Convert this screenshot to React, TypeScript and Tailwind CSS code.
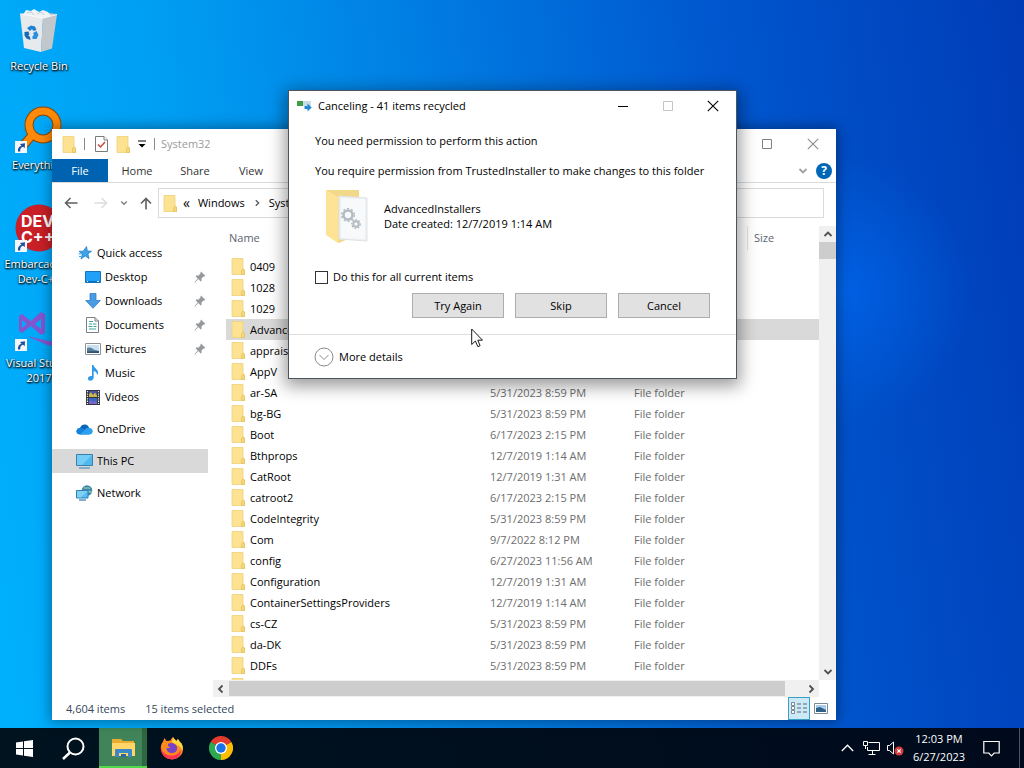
import type { ReactNode } from "react";

type FileRow = {
  name: string;
  modified: string;
  selected?: boolean;
};

type SidebarItem = {
  label: string;
  icon: ReactNode;
  pinned?: boolean;
  nested?: boolean;
  active?: boolean;
  spaced?: boolean;
};

const FILES: FileRow[] = [
  { name: "0409", modified: "12/7/2019 1:31 AM" },
  { name: "1028", modified: "5/31/2023 8:59 PM" },
  { name: "1029", modified: "5/31/2023 8:59 PM" },
  { name: "AdvancedInstallers", modified: "12/7/2019 1:14 AM", selected: true },
  { name: "appraiser", modified: "5/31/2023 8:59 PM" },
  { name: "AppV", modified: "5/31/2023 8:59 PM" },
  { name: "ar-SA", modified: "5/31/2023 8:59 PM" },
  { name: "bg-BG", modified: "5/31/2023 8:59 PM" },
  { name: "Boot", modified: "6/17/2023 2:15 PM" },
  { name: "Bthprops", modified: "12/7/2019 1:14 AM" },
  { name: "CatRoot", modified: "12/7/2019 1:31 AM" },
  { name: "catroot2", modified: "6/17/2023 2:15 PM" },
  { name: "CodeIntegrity", modified: "5/31/2023 8:59 PM" },
  { name: "Com", modified: "9/7/2022 8:12 PM" },
  { name: "config", modified: "6/27/2023 11:56 AM" },
  { name: "Configuration", modified: "12/7/2019 1:31 AM" },
  { name: "ContainerSettingsProviders", modified: "12/7/2019 1:14 AM" },
  { name: "cs-CZ", modified: "5/31/2023 8:59 PM" },
  { name: "da-DK", modified: "5/31/2023 8:59 PM" },
  { name: "DDFs", modified: "5/31/2023 8:59 PM" },
  { name: "de-DE", modified: "5/31/2023 8:59 PM" },
];

/* ---------- icons ---------- */

function FolderIcon() {
  return (
    <svg width="14" height="17" viewBox="0 0 14 17" className="shrink-0">
      <path d="M1 .5h11v10.500l1.500 1V16.500H1z" fill="#fde391" stroke="#edd07c" strokeWidth=".8" />
      <path d="M10.500 16.500V12.500l1.500-1.500 1.500 1v4.500z" fill="#f6d877" stroke="#e3bf5c" strokeWidth=".7" />
    </svg>
  );
}

function Chevron({ d, color = "#505050", size = 10 }: { d: string; color?: string; size?: number }) {
  return (
    <svg width={size} height={size} viewBox="0 0 10 10" fill="none" stroke={color} strokeWidth="1.8">
      <path d={d} />
    </svg>
  );
}

const UP = "M1.5 7 5 3.5 8.5 7";
const DOWN = "M1.5 3 5 6.5 8.5 3";
const LEFT = "M6.5 1.5 3 5l3.5 3.5";
const RIGHT = "M3.5 1.5 7 5 3.5 8.5";

function CloseIcon({ color }: { color: string }) {
  return (
    <svg width="12" height="12" viewBox="0 0 12 12" stroke={color} strokeWidth="1.1">
      <path d="M.8.8l10.4 10.4M11.2.8.8 11.2" />
    </svg>
  );
}

function MaximizeIcon({ color }: { color: string }) {
  return (
    <svg width="10" height="10" viewBox="0 0 10 10" fill="none" stroke={color}>
      <path d="M.5.5h9v9h-9z" />
    </svg>
  );
}

function PinIcon() {
  return (
    <svg width="12" height="12" viewBox="0 0 12 12" fill="#96999c">
      <path d="M7 .5 11.5 5l-1.2.6-.8-.1-2 2 .1 2.200-.9.8-2.400-2.400L1 11.400l-.5-.5 3.300-3.300L1.500 5.300l.8-.9 2.200.1 2-2-.1-.8z" />
    </svg>
  );
}

function StarIcon() {
  return (
    <svg width="14" height="14" viewBox="0 0 14 14">
      <path d="M8.500.6 9.300 4.900 13.500 5.300 9.900 7.800 11 12.600 7.200 9.900 3 13l1.400-4.900L1 5.400l4.300-.2z" fill="#3ea3e8" stroke="#1d7fc7" strokeWidth=".8" />
      <path d="M.5 8h3M1 10.500h2" stroke="#3ea3e8" />
    </svg>
  );
}

function DesktopIcon() {
  return (
    <svg width="16" height="14" viewBox="0 0 16 14">
      <path d="M.5 1.500h15v11H.5z" fill="#22a0f8" stroke="#1673c0" />
      <path d="M1 11.500h14" stroke="#0d6cb8" />
      <path d="M2 11.500h1M12 11.500h2" stroke="#d8efff" />
    </svg>
  );
}

function DownloadIcon() {
  return (
    <svg width="16" height="16" viewBox="0 0 16 16">
      <path d="M5 .5h6v7h4.300L8 15.300.7 7.500H5z" fill="#4a9be2" stroke="#2f7fc8" strokeWidth=".8" />
    </svg>
  );
}

function DocumentIcon() {
  return (
    <svg width="13" height="16" viewBox="0 0 13 16">
      <path d="M.5.5h8.500L12.500 4v11.500H.5z" fill="#fff" stroke="#7b8084" />
      <path d="M9 .5V4h3.500" fill="none" stroke="#7b8084" />
      <path d="M3 4.500h4M3 7h3M7 7h3.500M2.500 9.500h4M7.500 9.500h3M3 12h7" stroke="#3ba7a0" strokeWidth="1.200" />
    </svg>
  );
}

function PictureIcon() {
  return (
    <svg width="16" height="12" viewBox="0 0 16 12">
      <path d="M.5.5h15v11H.5z" fill="#fff" stroke="#8b9299" />
      <path d="M2 2h12v8H2z" fill="#c7e0f4" />
      <path d="M2 5c3-1.500 5 .5 8 2l4 1v2H2z" fill="#5b7f96" />
      <path d="M2 8.500 14 8v2H2z" fill="#2f5573" />
    </svg>
  );
}

function MusicIcon() {
  return (
    <svg width="12" height="16" viewBox="0 0 12 16">
      <path d="M5 0h1.500c.3 3 4.500 4 4.500 7.500 0 1.200-.4 2-1 2.800.3-2.300-1.300-3.800-3.300-4.300V12.500C6.700 14.500 5 15.700 3.300 15.700 1.800 15.700.8 14.800.8 13.600c0-1.700 2.200-3.100 4.200-2.500z" fill="#2f9be6" />
    </svg>
  );
}

function VideoIcon() {
  return (
    <svg width="14" height="15" viewBox="0 0 14 15">
      <path d="M0 0h14v15H0z" fill="#33353a" />
      <path d="M1.500 1v13M12.500 1v13" stroke="#e9e9e9" strokeWidth="1.200" strokeDasharray="1.300 1.100" />
      <path d="M3 1h8v6H3z" fill="#4850a8" />
      <path d="M3 8h8v6H3z" fill="#3867c4" />
      <path d="M3 4.500 5 2l2 3 2-2.500 2 3V7H3z" fill="#c9b84c" />
      <path d="M3 12l2-2 2 2.500 2-2 2 2V14H3z" fill="#7a68c8" />
    </svg>
  );
}

function OneDriveIcon() {
  return (
    <svg width="17" height="11" viewBox="0 0 17 11">
      <path d="M4 4C5 1.400 7 .3 9 .5c2 .2 3.500 1.500 4 3.200L9 7.500z" fill="#0a64b8" />
      <path d="M4.500 3.700C2 3.800.3 5.200.3 7.300c0 2 1.500 3.300 3.400 3.300h9.800L8 5z" fill="#1382d8" />
      <path d="M12.500 3.800c2.600 0 4.200 1.400 4.200 3.500 0 2-1.500 3.300-3.300 3.300H4L9.500 5c.8-.8 1.800-1.200 3-1.200z" fill="#2b9ff0" />
    </svg>
  );
}

function PcIcon() {
  return (
    <svg width="17" height="15" viewBox="0 0 17 15">
      <path d="M.5.5h16v11H.5z" fill="#4fb9ee" stroke="#3c7fa8" />
      <path d="M1 1h15L6 11H1z" fill="#8fd8f8" opacity=".6" />
      <path d="M3 14h11" stroke="#4a8fbd" strokeWidth="1.200" />
    </svg>
  );
}

function NetworkIcon() {
  return (
    <svg width="17" height="16" viewBox="0 0 17 16">
      <circle cx="11" cy="5.500" r="5.300" fill="#3f86ac" />
      <path d="M8 2.500c2 2 3-1 6 1M9 6c3 0 4 1 7 1" stroke="#8cc4b0" strokeWidth="1.300" fill="none" />
      <path d="M.5 5.500h11.500v7.500H.5z" fill="#58bdf0" stroke="#2d7fb0" />
      <path d="M1 6h10.500L5 12.500H1z" fill="#9adcf8" opacity=".6" />
      <path d="M3 15h7" stroke="#2d7fb0" strokeWidth="1.200" />
    </svg>
  );
}

function ShortcutArrow() {
  return (
    <svg width="12" height="12" viewBox="0 0 12 12" className="absolute bottom-0 left-0">
      <path d="M0 0h12v12H0z" fill="#f4f6fa" />
      <path d="M3 10.500C2.500 7.500 4 5.300 6.500 4.800L5 3l5-.8-.3 5-1.500-1.400C6 6.200 5 8 5.200 10.500z" fill="#1c4f9c" />
    </svg>
  );
}

function RecycleBinIcon() {
  return (
    <svg width="48" height="48" viewBox="0 0 48 48">
      <path d="M5 8 16 5l26 3-14 5z" fill="#c3ccd3" />
      <path d="M8 9l3-5 5 1 3-2 5 3 4-2 5 2 3 4-8 3z" fill="#eef2f5" />
      <path d="M12 7l4-1 3 3M22 8l4-2 3 3" stroke="#c3ccd3" fill="none" />
      <path d="M5 8l23 4-2 34-17-4z" fill="#e6eaed" />
      <path d="M28 12l14-3.500-5 34L26 46z" fill="#c2c7cc" />
      <path d="M5 8l23 4 14-3.500" fill="none" stroke="#f8fafb" />
      <path d="M12 22l4-2.500 4 1 1.500 3.500-3 1-1.500-2-2 2z" fill="#1f7fd2" />
      <path d="M21.500 25l2 4-2 4-4 0 0-3 1.500-1-1-2z" fill="#2b8fe0" />
      <path d="M9.500 26l4-.5 1 3-1.500.5 2 2 .5 3-4-1.500-2-3z" fill="#1668b8" />
    </svg>
  );
}

function EverythingIcon() {
  return (
    <svg width="48" height="48" viewBox="0 0 48 48">
      <path d="M18 29 8 41" stroke="#8c4700" strokeWidth="9" />
      <circle cx="28" cy="20" r="14" fill="none" stroke="#8c4700" strokeWidth="9" />
      <path d="M18.500 28.500 8 41" stroke="#ff8a0a" strokeWidth="7" />
      <circle cx="28" cy="20" r="14" fill="none" stroke="#ff8a0a" strokeWidth="7" />
    </svg>
  );
}

function DevCppIcon() {
  return (
    <svg width="48" height="48" viewBox="0 0 48 48">
      <circle cx="24" cy="24" r="23.500" fill="#c91f26" />
      <g fill="#fff" fontFamily="Inter, sans-serif" fontWeight="700" fontSize="16">
        <text x="6" y="23">DEV</text>
        <text x="6" y="39">C++</text>
      </g>
    </svg>
  );
}

function VisualStudioIcon() {
  return (
    <svg width="48" height="48" viewBox="0 0 48 48" fill="#8355cf">
      <path d="M4 13l3-2 9 7 10-9 4 2v19l-4 2-10-9-9 7-3-2zm3 4v8l5-4zm19-1-6 5 6 5z" />
      <path d="M12 33l22 5 14 1v5l-16-2z" />
    </svg>
  );
}

function TransferIcon() {
  return (
    <svg width="15" height="12" viewBox="0 0 15 12">
      <path d="M0 1h14v5H0z" fill="#c9dde6" />
      <path d="M0 1h6v5H0z" fill="#3f9b46" />
      <path d="M7.500 6h3V3.500L14.700 7.500l-4.200 4V9h-3z" fill="#2287d6" />
    </svg>
  );
}

function SystemFolderIcon() {
  return (
    <svg width="43" height="56" viewBox="0 0 43 56">
      <path d="M1 1h33v44L14 54 1 45z" fill="#f2d98a" />
      <path d="M14 7l28 2v43l-28-2z" fill="#eef1f4" stroke="#dfe3e6" />
      <path d="M16 9l24 1v40l-24-1z" fill="#f7f9fa" />
      <path d="M1 1l12 7v46L1 46z" fill="#ffe394" />
      <g fill="none" stroke="#b3bac1">
        <circle cx="23" cy="26" r="4.500" strokeWidth="2.500" />
        <circle cx="23" cy="26" r="6.300" strokeWidth="1.500" strokeDasharray="2 2" />
        <circle cx="31" cy="35" r="2.800" strokeWidth="2" />
        <circle cx="31" cy="35" r="4.300" strokeWidth="1.300" strokeDasharray="1.600 1.600" />
      </g>
    </svg>
  );
}

/* ---------- explorer window ---------- */

const SIDEBAR: SidebarItem[] = [
  { label: "Quick access", icon: <StarIcon /> },
  { label: "Desktop", icon: <DesktopIcon />, pinned: true, nested: true },
  { label: "Downloads", icon: <DownloadIcon />, pinned: true, nested: true },
  { label: "Documents", icon: <DocumentIcon />, pinned: true, nested: true },
  { label: "Pictures", icon: <PictureIcon />, pinned: true, nested: true },
  { label: "Music", icon: <MusicIcon />, nested: true },
  { label: "Videos", icon: <VideoIcon />, nested: true },
  { label: "OneDrive", icon: <OneDriveIcon />, spaced: true },
  { label: "This PC", icon: <PcIcon />, active: true, spaced: true },
  { label: "Network", icon: <NetworkIcon />, spaced: true },
];

function TitleBar() {
  return (
    <header className="flex h-[30px] shrink-0 items-center">
      <div className="flex items-center gap-2 pl-2.5">
        <FolderIcon />
        <span className="h-3 w-px bg-[#8a8a8a]" />
        <button aria-label="Properties" className="ml-0.5">
          <svg width="13" height="16" viewBox="0 0 13 16" fill="#fff" stroke="#7a7a7a">
            <path d="M.5.500H9L12.500 4v11.500H.5z" />
            <path d="M9 .5V4h3.500" />
            <path d="M3 8.500 5.500 11l4.500-5" fill="none" stroke="#c8473c" strokeWidth="1.500" />
          </svg>
        </button>
        <button aria-label="New folder">
          <FolderIcon />
        </button>
        <button aria-label="Customize Quick Access Toolbar">
          <svg width="8" height="8" viewBox="0 0 8 8">
            <path d="M0 1h8" stroke="#000" />
            <path d="M.5 4h7L4 7.500z" />
          </svg>
        </button>
        <span className="h-3 w-px bg-[#8a8a8a]" />
      </div>
      <h1 className="pl-1.5 text-[#9b9b9b]">System32</h1>
      <div className="ml-auto flex self-stretch">
        <button aria-label="Maximize" className="grid w-[46px] place-items-center">
          <MaximizeIcon color="#808080" />
        </button>
        <button aria-label="Close" className="grid w-[46px] place-items-center">
          <CloseIcon color="#8a8a8a" />
        </button>
      </div>
    </header>
  );
}

function Ribbon() {
  return (
    <nav className="flex h-6 shrink-0 items-stretch border-b border-[#dadbdc] text-[#333]">
      <button className="w-14 bg-[#0063b1] text-white">File</button>
      <button className="w-[58px]">Home</button>
      <button className="w-[58px]">Share</button>
      <button className="w-[54px]">View</button>
      <div className="ml-auto flex items-center gap-2 pr-1">
        <button aria-label="Expand the Ribbon">
          <Chevron d={DOWN} color="#a0a0a0" />
        </button>
        <button
          aria-label="Help"
          className="grid size-4 place-items-center rounded-full bg-[#0067b8] text-[12px] leading-none font-bold text-white"
        >
          ?
        </button>
      </div>
    </nav>
  );
}

function AddressBar() {
  return (
    <div className="flex h-10 shrink-0 items-center pr-3">
      <div className="flex w-[106px] items-center gap-3 pl-3">
        <button aria-label="Back">
          <svg width="14" height="12" viewBox="0 0 14 12" fill="none" stroke="#5f5f5f" strokeWidth="1.500">
            <path d="M13.500 6H1.500M6.500 1l-5 5 5 5" />
          </svg>
        </button>
        <button aria-label="Forward" className="ml-1">
          <svg width="14" height="12" viewBox="0 0 14 12" fill="none" stroke="#dcdcdc" strokeWidth="1.500">
            <path d="M.5 6h12M7.500 1l5 5-5 5" />
          </svg>
        </button>
        <button aria-label="Recent locations">
          <Chevron d={DOWN} color="#808080" size={8} />
        </button>
        <button aria-label="Up">
          <svg width="12" height="13" viewBox="0 0 12 13" fill="none" stroke="#5f5f5f" strokeWidth="1.600">
            <path d="M6 12.500V1.500M1 6.500l5-5 5 5" />
          </svg>
        </button>
      </div>
      <div className="flex h-[30px] flex-1 items-center border border-[#d9d9d9] pl-1 text-black">
        <FolderIcon />
        <span className="pl-1.5 text-[14px]">«</span>
        <a href="#windows" className="px-2">
          Windows
        </a>
        <Chevron d={RIGHT} color="#606060" size={8} />
        <a href="#system32" className="pl-2">
          System32
        </a>
      </div>
    </div>
  );
}

function Sidebar() {
  return (
    <aside className="w-[156px] shrink-0 pt-[18px] text-black">
      <ul>
        {SIDEBAR.map((item) => (
          <li key={item.label} className={item.spaced ? "mt-2" : ""}>
            <a
              href="#"
              className={`flex h-6 items-center gap-1 pr-0.5 ${item.active ? "bg-[#d9d9d9]" : ""} ${item.nested ? "pl-8" : "pl-6"}`}
            >
              <span className="grid w-[17px] place-items-center">{item.icon}</span>
              {item.label}
              {item.pinned && (
                <span className="ml-auto">
                  <PinIcon />
                </span>
              )}
            </a>
          </li>
        ))}
      </ul>
    </aside>
  );
}

function FileTable() {
  return (
    <div className="min-h-0 flex-1 overflow-hidden pl-[13px]">
      <table className="w-full table-fixed border-collapse text-left">
        <colgroup>
          <col className="w-64" />
          <col className="w-36" />
          <col className="w-[121px]" />
          <col />
        </colgroup>
        <thead className="text-[#5a6470]">
          <tr className="h-[33px]">
            <th className="pb-1 pl-[3px] font-normal">Name</th>
            <th className="pb-1 pl-2 font-normal">Date modified</th>
            <th className="pb-1 pl-2 font-normal">Type</th>
            <th className="pb-1 font-normal">
              <div className="flex h-6 items-center border-l border-[#e2e2e2] pl-1.5">Size</div>
            </th>
          </tr>
        </thead>
        <tbody className="text-[#6d6d6d]">
          {FILES.map((file) => (
            <tr key={file.name} className={`h-[21px] ${file.selected ? "bg-[#d9d9d9]" : ""}`}>
              <td className="p-0 pl-[5px] text-black">
                <span className="flex items-center gap-[5px]">
                  <FolderIcon />
                  {file.name}
                </span>
              </td>
              <td className="p-0 pl-2">{file.modified}</td>
              <td className="p-0 pl-2">File folder</td>
              <td className="p-0" />
            </tr>
          ))}
        </tbody>
      </table>
    </div>
  );
}

function VerticalScrollbar() {
  return (
    <div className="mt-[3px] flex w-[17px] shrink-0 flex-col bg-[#f0f0f0]">
      <button aria-label="Scroll up" className="grid h-4 place-items-center">
        <Chevron d={UP} />
      </button>
      <div className="h-[17px] bg-[#cdcdcd]" />
      <button aria-label="Scroll down" className="mt-auto grid h-4 place-items-center">
        <Chevron d={DOWN} />
      </button>
    </div>
  );
}

function HorizontalScrollbar() {
  return (
    <div className="mr-[17px] flex h-[17px] shrink-0 items-stretch bg-[#f0f0f0]">
      <button aria-label="Scroll left" className="grid w-4 place-items-center">
        <Chevron d={LEFT} />
      </button>
      <div className="my-px mr-[18px] flex-1 bg-[#cdcdcd]" />
      <button aria-label="Scroll right" className="grid w-4 place-items-center">
        <Chevron d={RIGHT} />
      </button>
    </div>
  );
}

function StatusBar() {
  return (
    <footer className="flex h-[23px] shrink-0 items-center pr-2 pl-3.5 text-[#33475b]">
      <span>4,604 items</span>
      <span className="pl-5">15 items selected</span>
      <div className="ml-auto flex items-center gap-1 self-stretch">
        <button
          aria-label="Details view"
          className="grid w-[22px] place-items-center self-stretch border border-[#3a9fc4] bg-[#cbe9f6]"
        >
          <svg width="16" height="13" viewBox="0 0 16 13" fill="#fff" stroke="#7d8a92">
            <path d="M.5.500h3v3h-3zM.5 4.500h3v3h-3zM.5 8.500h3v3h-3z" />
            <path d="M6 2h4M12 2h4M6 6h4M12 6h4M6 10h4M12 10h4" stroke="#5a6b75" />
          </svg>
        </button>
        <button aria-label="Large thumbnails view">
          <svg width="14" height="11" viewBox="0 0 14 11">
            <path d="M.5.500h13v10H.5z" fill="#fff" stroke="#7d8a92" />
            <path d="M2 2h10v7H2z" fill="#a9cdec" />
            <path d="M2 5l4-1 6 3v2H2z" fill="#2f6186" />
          </svg>
        </button>
      </div>
    </footer>
  );
}

function ExplorerWindow() {
  return (
    <main className="absolute top-[129px] right-[188px] bottom-2 left-[52px] flex flex-col bg-white shadow-[0_0_12px_2px_rgba(0,0,0,0.35)]">
      <TitleBar />
      <Ribbon />
      <AddressBar />
      <div className="flex min-h-0 flex-1">
        <Sidebar />
        <section className="flex min-w-0 flex-1 flex-col pl-[5px]">
          <div className="flex min-h-0 flex-1">
            <FileTable />
            <VerticalScrollbar />
          </div>
          <HorizontalScrollbar />
        </section>
      </div>
      <StatusBar />
    </main>
  );
}

/* ---------- permission dialog ---------- */

function DialogButton({ children }: { children: ReactNode }) {
  return (
    <button className="h-[25px] w-[92px] border border-[#adadad] bg-[#e1e1e1]">{children}</button>
  );
}

function PermissionDialog() {
  return (
    <div
      role="dialog"
      aria-labelledby="dialog-title"
      className="absolute top-[90px] left-[288px] w-[449px] border border-[#4a5560] bg-white text-black shadow-[0_4px_16px_3px_rgba(0,0,0,0.4)]"
    >
      <header className="flex h-[30px] items-center pl-2">
        <TransferIcon />
        <h2 id="dialog-title" className="pl-1.5">
          Canceling - 41 items recycled
        </h2>
        <div className="ml-auto flex self-stretch">
          <button aria-label="Minimize" className="grid w-[45px] place-items-center">
            <span className="h-px w-[10px] bg-black" />
          </button>
          <button aria-label="Maximize" disabled className="grid w-[45px] place-items-center">
            <MaximizeIcon color="#c4c4c4" />
          </button>
          <button aria-label="Close" className="grid w-[46px] place-items-center">
            <CloseIcon color="#000" />
          </button>
        </div>
      </header>

      <div className="px-[26px] pt-3">
        <p className="leading-4">You need permission to perform this action</p>
        <p className="mt-[14px] leading-4">
          You require permission from TrustedInstaller to make changes to this folder
        </p>
        <div className="mt-2.5 flex items-start gap-4 pl-2.5">
          <SystemFolderIcon />
          <div className="pt-3 leading-[15px]">
            <p>AdvancedInstallers</p>
            <p>Date created: 12/7/2019 1:14 AM</p>
          </div>
        </div>
        <label className="mt-6 flex h-4 items-center gap-[5px]">
          <input type="checkbox" className="size-[13px] appearance-none border border-[#333] bg-white" />
          Do this for all current items
        </label>
        <div className="mt-2 flex justify-end gap-[11px]">
          <DialogButton>Try Again</DialogButton>
          <DialogButton>Skip</DialogButton>
          <DialogButton>Cancel</DialogButton>
        </div>
      </div>

      <footer className="mt-4 border-t border-[#dfdfdf] px-[25px] pt-3 pb-[11px]">
        <button className="flex items-center gap-[5px]">
          <svg width="20" height="20" viewBox="0 0 20 20" fill="none" stroke="#8a8a8a">
            <circle cx="10" cy="10" r="9" />
            <path d="M5.500 8 10 12.500 14.500 8" />
          </svg>
          More details
        </button>
      </footer>
    </div>
  );
}

/* ---------- desktop ---------- */

const SHORTCUTS = [
  { label: "Recycle Bin", icon: <RecycleBinIcon />, arrow: false },
  { label: "Everything", icon: <EverythingIcon />, arrow: true },
  { label: "Embarcadero Dev-C++", icon: <DevCppIcon />, arrow: true },
  { label: "Visual Studio 2017", icon: <VisualStudioIcon />, arrow: true },
];

function DesktopIcons() {
  return (
    <ul className="w-[78px] pt-1.5">
      {SHORTCUTS.map(({ label, icon, arrow }) => (
        <li key={label} className="h-[99px]">
          <a href="#" className="flex flex-col items-center gap-1 text-center">
            <span className="relative">
              {icon}
              {arrow && <ShortcutArrow />}
            </span>
            <span className="leading-[15px] text-white [text-shadow:0_1px_2px_#000,1px_1px_2px_#000]">
              {label}
            </span>
          </a>
        </li>
      ))}
    </ul>
  );
}

function Cursor() {
  return (
    <svg width="12" height="20" viewBox="0 0 12 20" className="absolute top-[328px] left-[471px]">
      <path d="M.7 1v15.500l3.700-3.500 2.400 5.700 2.300-1-2.300-5.500h4.700z" fill="#fff" stroke="#000" strokeWidth=".9" />
    </svg>
  );
}

/* ---------- taskbar ---------- */

function Taskbar() {
  return (
    <nav className="flex h-10 shrink-0 items-stretch bg-linear-to-r from-[#00131f] to-[#000a1c] text-white">
      <button aria-label="Start" className="grid w-12 place-items-center">
        <svg width="17" height="17" viewBox="0 0 17 17" fill="#fff">
          <path d="M0 2.500 7 1.500V8H0zM8 1.300 17 0v8H8zM0 9h7v6.500l-7-1zM8 9h9v8l-9-1.300z" />
        </svg>
      </button>
      <button aria-label="Search" className="grid w-[51px] place-items-center">
        <svg width="23" height="23" viewBox="0 0 23 23" fill="none" stroke="#fff" strokeWidth="2">
          <circle cx="13.500" cy="9.500" r="8" />
          <path d="M8 15.500 1 22" strokeWidth="2.500" />
        </svg>
      </button>
      <button
        aria-label="File Explorer"
        className="grid w-12 place-items-center border-b-2 border-[#4fd84a] bg-linear-to-r from-[#41845a] from-90% to-[#2c6840] to-90%"
      >
        <svg width="23" height="19" viewBox="0 0 23 19">
          <path d="M0 1h9l2 2h11v15H0z" fill="#e8ad31" />
          <path d="M0 5h23v13H0z" fill="#ffd667" />
          <path d="M3 19v-7q0-1 1-1h15q1 0 1 1v7h-4v-4H7v4z" fill="#3b87c8" />
          <path d="M9 16h5v3H9z" fill="#2569a8" />
        </svg>
      </button>
      <button aria-label="Firefox" className="grid w-[50px] place-items-center">
        <svg width="24" height="24" viewBox="0 0 24 24">
          <path d="M13 1c1 2 2 2.500 3.500 4L18 3c1 2 2 3 3.500 4.500 2 3.500 2 8-.5 11.500-5 6-13 5.500-17.500.5C0 15 0 9.500 3 5.500L4.500 2l2 3 4-.5C11 3 12 2 13 1z" fill="#ff8a1f" />
          <path d="M13 1c1 2 2 2.500 3.500 4L18 3c1 2 2 3 3.500 4.500 1.500 3 1.500 5 1 7C20 9 15 9 12 6z" fill="#ffd63c" />
          <path d="M1 11c1 7 8 10 14 8 3-1 5-3 5.500-5C22 21 14 25 8 22.500 3 20.500.5 16 1 11z" fill="#ff3155" />
          <path d="M8 8c3-2 7-.5 8.500 2 1.500 3 0 7-4 7-4 0-6-2-6-5h4L8 10z" fill="#7443c8" />
        </svg>
      </button>
      <button aria-label="Chrome" className="grid w-12 place-items-center">
        <svg width="24" height="24" viewBox="0 0 24 24">
          <path d="M12 12 1.600 6A12 12 0 0 1 22.400 6z" fill="#e33b2e" />
          <path d="M12 12V24A12 12 0 0 1 1.600 6z" fill="#2da94f" />
          <path d="M12 12 22.400 6A12 12 0 0 1 12 24z" fill="#fdbd00" />
          <path d="M6.800 15 1.600 6 12 12z" fill="#2da94f" />
          <path d="M17.200 15 12 24V12z" fill="#fdbd00" />
          <circle cx="12" cy="12" r="6" fill="#fff" />
          <circle cx="12" cy="12" r="4.700" fill="#1a73e8" />
        </svg>
      </button>

      <div className="ml-auto flex items-center">
        <button aria-label="Show hidden icons" className="grid w-6 place-items-center">
          <svg width="13" height="8" viewBox="0 0 13 8" fill="none" stroke="#fff" strokeWidth="1.300">
            <path d="M.8 7 6.500 1.200 12.200 7" />
          </svg>
        </button>
        <button aria-label="Network" className="grid w-6 place-items-center">
          <svg width="17" height="14" viewBox="0 0 17 14" fill="none" stroke="#fff">
            <path d="M5.500 1.500h11v8h-12V6M9.500 9.500V13M5.500 13.500h7M.5.500h4v4h-4zM2.500 4.500V8" />
          </svg>
        </button>
        <button aria-label="Volume muted" className="grid w-6 place-items-center">
          <svg width="17" height="15" viewBox="0 0 17 15" fill="none" stroke="#fff">
            <path d="M.5 4.500h2l4-3.500v12l-4-3.500h-2z" />
            <circle cx="12" cy="10" r="4.500" fill="#d13c3c" stroke="none" />
            <path d="M10.300 8.300l3.400 3.400M13.700 8.300l-3.400 3.400" strokeWidth="1.200" />
          </svg>
        </button>
        <div className="w-16 text-center leading-[18px]">
          <p>12:03 PM</p>
          <p>6/27/2023</p>
        </div>
        <button aria-label="Notifications" className="grid w-10 place-items-center">
          <svg width="17" height="17" viewBox="0 0 17 17" fill="none" stroke="#fff" strokeWidth="1.200">
            <path d="M.8 1.500h15.400v11.500h-5L8.500 15.800 5.800 13h-5z" />
          </svg>
        </button>
        <button aria-label="Show desktop" className="ml-2 w-[5px] self-stretch border-l border-[#4a5563]" />
      </div>
    </nav>
  );
}

export default function App() {
  return (
    <div className="flex h-screen flex-col overflow-hidden font-['Open_Sans','Noto_Sans',sans-serif] text-[11px] leading-4 text-[#1a1a1a]">
      <div className="relative min-h-0 flex-1 bg-[radial-gradient(circle_at_82%_40%,rgba(0,115,255,0.5),transparent_14%),linear-gradient(82deg,#00b0fd_0%,#009ff3_22%,#007de2_46%,#0057cf_72%,#003cb6_100%)]">
        <DesktopIcons />
        <ExplorerWindow />
        <PermissionDialog />
        <Cursor />
      </div>
      <Taskbar />
    </div>
  );
}
